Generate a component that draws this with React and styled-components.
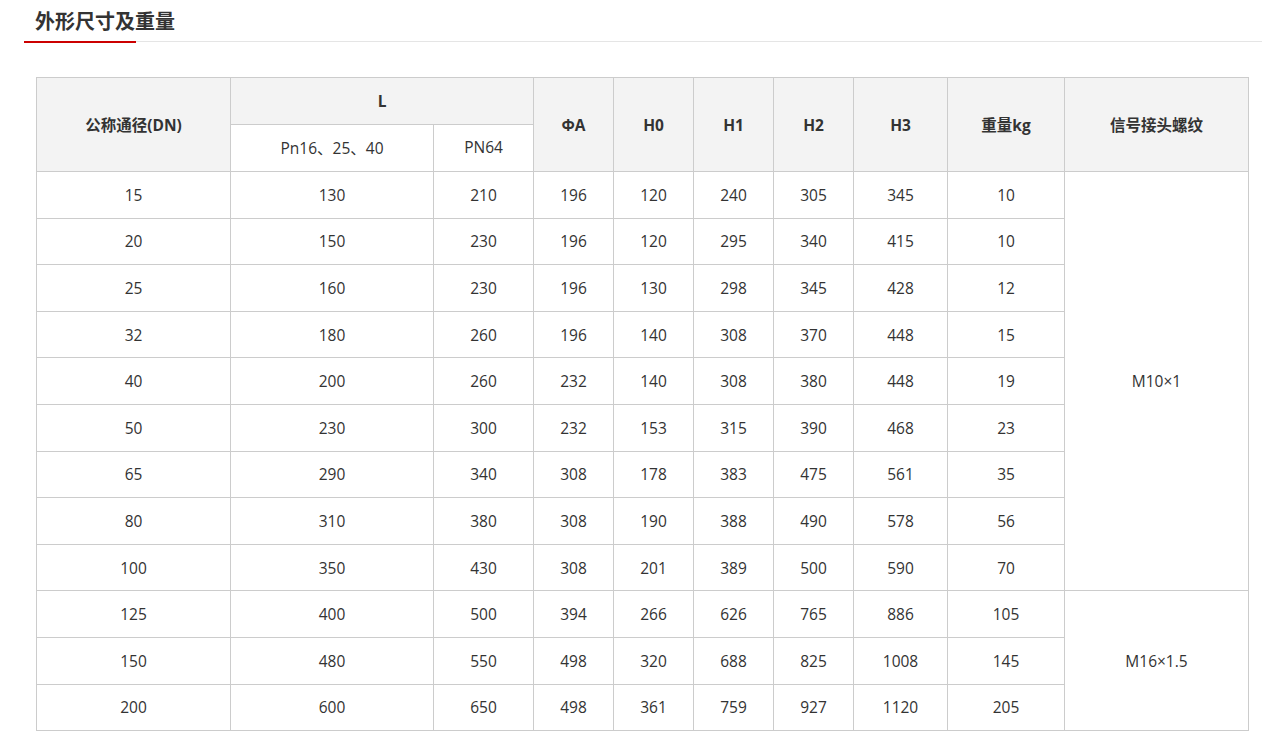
import React from "react";
import styled, { createGlobalStyle } from "styled-components";

const Global = createGlobalStyle`
  html, body { margin: 0; padding: 0; background: #fff; }
  body { font-family: "Open Sans", "Noto Sans CJK SC", sans-serif; color: #333; }
`;

const Page = styled.div`
  padding: 0 9px 0 24px;
`;

const TitleBar = styled.div`
  border-bottom: 1px solid #e5e5e5;
  display: flex;
  height: 42px;
  box-sizing: border-box;
`;

const Title = styled.h2`
  margin: 0 0 -1px 0;
  padding: 0 0 0 11px;
  width: 112px;
  box-sizing: border-box;
  font-family: "Noto Sans CJK SC", sans-serif;
  font-size: 20px;
  font-weight: 700;
  line-height: 42px;
  height: 43px;
  color: #333;
  border-bottom: 2px solid #c00;
  white-space: nowrap;
`;

const TableWrap = styled.div`
  padding: 35px 0 0 12px;
`;

const Table = styled.table`
  border-collapse: collapse;
  table-layout: fixed;
  width: 1213px;
  font-size: 15.5px;
  color: #333;
`;

const Th = styled.th`
  background: ${(p) => (p.$plain ? "#fff" : "#f3f3f3")};
  border: 1px solid #cccccc;
  font-weight: ${(p) => (p.$plain ? 400 : 700)};
  text-align: center;
  padding: ${(p) => (p.$plain ? "0 0 2px" : "0")};
  font-family: "Open Sans", "Noto Sans CJK SC", sans-serif;
`;

const HeadRow = styled.tr`
  height: 47px;
`;

const Row = styled.tr`
  height: 46.6px;
`;

const Td = styled.td`
  border: 1px solid #cccccc;
  text-align: center;
  padding: 0;
`;

const widths = [194, 203, 100, 80, 80, 80, 80, 94, 117, 184];

const rows = [
  ["15", "130", "210", "196", "120", "240", "305", "345", "10"],
  ["20", "150", "230", "196", "120", "295", "340", "415", "10"],
  ["25", "160", "230", "196", "130", "298", "345", "428", "12"],
  ["32", "180", "260", "196", "140", "308", "370", "448", "15"],
  ["40", "200", "260", "232", "140", "308", "380", "448", "19"],
  ["50", "230", "300", "232", "153", "315", "390", "468", "23"],
  ["65", "290", "340", "308", "178", "383", "475", "561", "35"],
  ["80", "310", "380", "308", "190", "388", "490", "578", "56"],
  ["100", "350", "430", "308", "201", "389", "500", "590", "70"],
  ["125", "400", "500", "394", "266", "626", "765", "886", "105"],
  ["150", "480", "550", "498", "320", "688", "825", "1008", "145"],
  ["200", "600", "650", "498", "361", "759", "927", "1120", "205"],
];

export default function App() {
  return (
    <Page>
      <Global />
      <TitleBar>
        <Title>外形尺寸及重量</Title>
      </TitleBar>
      <TableWrap>
        <Table>
          <colgroup>
            {widths.map((w, i) => (
              <col key={i} style={{ width: w }} />
            ))}
          </colgroup>
          <thead>
            <HeadRow>
              <Th rowSpan={2}>公称通径(DN)</Th>
              <Th colSpan={2}>L</Th>
              <Th rowSpan={2}>ΦA</Th>
              <Th rowSpan={2}>H0</Th>
              <Th rowSpan={2}>H1</Th>
              <Th rowSpan={2}>H2</Th>
              <Th rowSpan={2}>H3</Th>
              <Th rowSpan={2}>重量kg</Th>
              <Th rowSpan={2}>信号接头螺纹</Th>
            </HeadRow>
            <HeadRow>
              <Th $plain>Pn16、25、40</Th>
              <Th $plain>PN64</Th>
            </HeadRow>
          </thead>
          <tbody>
            {rows.map((r, i) => (
              <Row key={i}>
                {r.map((c, j) => (
                  <Td key={j}>{c}</Td>
                ))}
                {i === 0 && <Td rowSpan={9}>M10×1</Td>}
                {i === 9 && <Td rowSpan={3}>M16×1.5</Td>}
              </Row>
            ))}
          </tbody>
        </Table>
      </TableWrap>
    </Page>
  );
}
